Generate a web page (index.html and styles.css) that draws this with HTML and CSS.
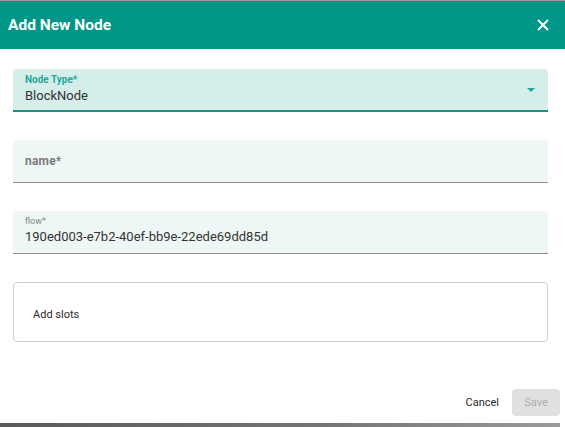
FILE: index.html
```html
<!DOCTYPE html>
<html>
<head>
<meta charset="utf-8">
<link rel="stylesheet" href="styles.css">
</head>
<body>
<div class="page">
  <div class="topline"></div>
  <header class="header">
    <h1 class="title">Add New Node</h1>
    <button class="close" aria-label="close">
      <svg width="12" height="12" viewBox="0 0 12 12"><path d="M1 1L11 11M11 1L1 11" stroke="#fff" stroke-width="2" fill="none"/></svg>
    </button>
  </header>
  <main class="content">
    <div class="field field-active">
      <div class="label label-active">Node Type*</div>
      <div class="value">BlockNode</div>
      <span class="arrow"></span>
    </div>
    <div class="field field-empty">
      <div class="placeholder">name*</div>
    </div>
    <div class="field">
      <div class="label">flow*</div>
      <div class="value">190ed003-e7b2-40ef-bb9e-22ede69dd85d</div>
    </div>
    <div class="slots">Add slots</div>
  </main>
  <footer class="footer">
    <button class="btn cancel">Cancel</button>
    <button class="btn save">Save</button>
  </footer>
  <div class="bottomstrip"></div>
</div>
</body>
</html>
```
FILE: styles.css
```css
* { box-sizing: border-box; }
html, body { margin: 0; padding: 0; background: #fff; }
body { font-family: Roboto, "Noto Sans", sans-serif; width: 565px; height: 427px; overflow: hidden; }
.page { display: flex; flex-direction: column; height: 427px; }
.topline { height: 1px; background: #9a9a9a; }
.header {
  height: 48px; background: #009688; display: flex; align-items: center;
  justify-content: space-between; padding: 0 16px 0 8px;
}
.title { margin: 0; color: #fff; font-size: 15.5px; font-weight: 700; letter-spacing: 0; }
.close { background: none; border: 0; padding: 0; width: 12px; height: 12px; display: flex; cursor: pointer; }
.content { padding: 20px 17px 0 13px; display: flex; flex-direction: column; gap: 28px; }
.field {
  position: relative; height: 43px; background: #eef7f5; border-radius: 4px 4px 0 0;
  border-bottom: 1px solid #8c8c8c; padding: 5px 12px 0 12px;
}
.field-active { background: #d5eeea; border-bottom: 2px solid #1a8f83; }
.label { font-size: 9px; color: #8a8a8a; line-height: 11px; }
.label-active { font-size: 10px; font-weight: 700; color: #26a69a; line-height: 12px; }
.value { font-size: 13px; color: #333; line-height: 17px; margin-top: 1px; }
.field-empty { display: flex; align-items: center; padding-top: 0; }
.placeholder { font-size: 12px; font-weight: 700; color: #7a7a7a; letter-spacing: 0.2px; }
.arrow {
  position: absolute; right: 13px; top: 19px; width: 0; height: 0;
  border-left: 4px solid transparent; border-right: 4px solid transparent; border-top: 4px solid #26a69a;
}
.slots {
  height: 60px; border: 1px solid #cfcfcf; border-radius: 4px; display: flex; align-items: center;
  padding: 5px 0 0 19px; font-size: 11px; color: #2a2a2a;
}
.footer { display: flex; justify-content: flex-end; align-items: center; gap: 13px; padding: 0 5px 0 0; margin-top: 47px; }
.btn { font-family: inherit; font-size: 11px; border: 0; background: none; cursor: pointer; }
.cancel { color: #2a2a2a; padding: 0; }
.save { width: 48px; height: 27px; background: #e0e0e0; color: #adadad; border-radius: 4px; padding: 0; }
.bottomstrip { margin-top: auto; height: 4px; background: linear-gradient(90deg, #5a5a5a, #767676 60%, #9a9a9a); margin-right: 5px; }
```
